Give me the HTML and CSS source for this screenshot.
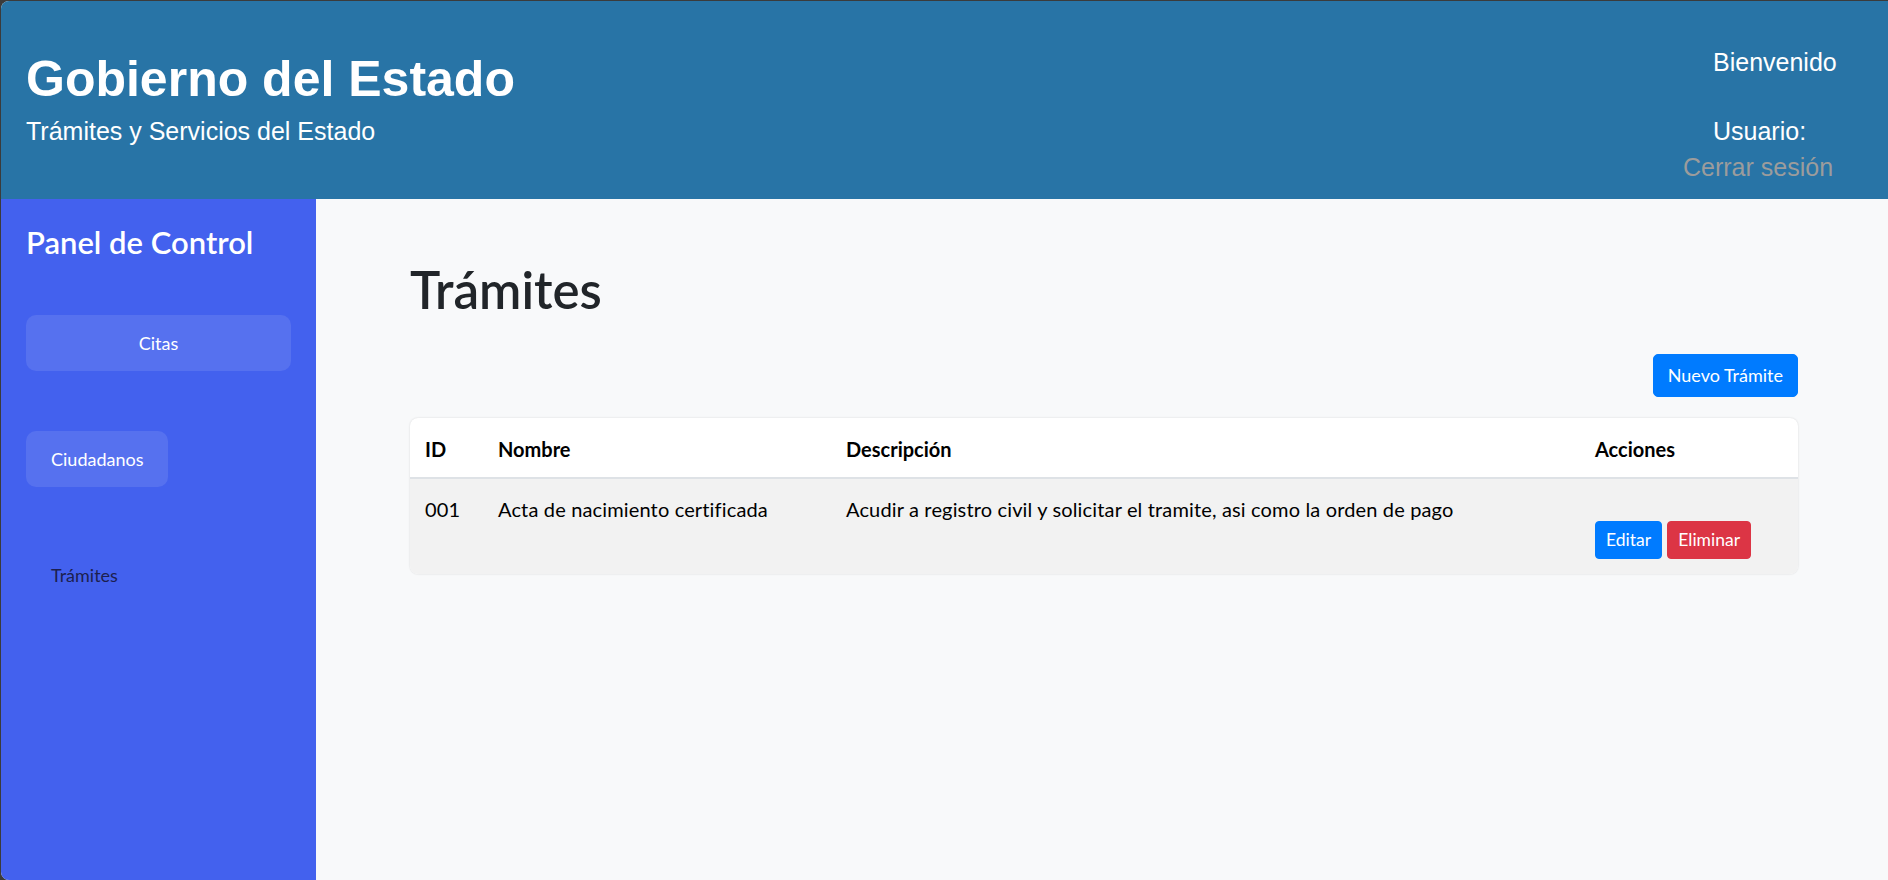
FILE: index.html
```html
<!DOCTYPE html>
<html lang="es">
<head>
<meta charset="utf-8">
<title>Trámites</title>
<link rel="stylesheet" href="styles.css">
</head>
<body>
<div class="window">
  <header class="topbar">
    <div class="brand">
      <h1 class="brand-title">Gobierno del Estado</h1>
      <p class="brand-sub">Trámites y Servicios del Estado</p>
    </div>
    <div class="user">
      <p class="user-welcome">Bienvenido</p>
      <p class="user-name">Usuario: </p>
      <a class="user-logout" href="#">Cerrar sesión</a>
    </div>
  </header>
  <div class="body">
    <aside class="sidebar">
      <h3 class="sidebar-title">Panel de Control</h3>
      <ul class="nav">
        <li class="nav-item"><a class="nav-link nav-link-block" href="#">Citas</a></li>
        <li class="nav-item"><a class="nav-link" href="#">Ciudadanos</a></li>
        <li class="nav-item"><a class="nav-link nav-link-plain" href="#">Trámites</a></li>
      </ul>
    </aside>
    <main class="content">
      <h1 class="page-title">Trámites</h1>
      <div class="toolbar">
        <a class="btn btn-primary" href="#">Nuevo Trámite</a>
      </div>
      <div class="table-card">
        <table class="table">
          <thead>
            <tr>
              <th class="c-id">ID</th>
              <th class="c-name">Nombre</th>
              <th class="c-desc">Descripción</th>
              <th class="c-act">Acciones</th>
            </tr>
          </thead>
          <tbody>
            <tr>
              <td>001</td>
              <td>Acta de nacimiento certificada</td>
              <td>Acudir a registro civil y solicitar el tramite, asi como la orden de pago</td>
              <td><div class="actions"><a class="btn btn-sm btn-primary" href="#">Editar</a> <a class="btn btn-sm btn-danger" href="#">Eliminar</a></div></td>
            </tr>
          </tbody>
        </table>
      </div>
    </main>
  </div>
</div>
</body>
</html>
```

FILE: styles.css
```css
* { box-sizing: border-box; }

html, body {
  margin: 0;
  padding: 0;
  height: 880px;
  overflow: hidden;
  background: #3b3b3b;
}

body {
  font-family: "Lato", "Noto Sans", sans-serif;
  color: #212529;
}

.window {
  margin: 1px 0 0 1px;
  height: 879px;
  border-radius: 8px 0 0 8px;
  overflow: hidden;
  display: flex;
  flex-direction: column;
  background: #f8f9fa;
}

/* Header */
.topbar {
  flex: 0 0 198px;
  height: 198px;
  background: #2874a6;
  color: #fff;
  display: flex;
  justify-content: space-between;
  font-family: "Liberation Sans", Arial, sans-serif;
}

.brand {
  padding: 48px 0 0 25px;
}

.brand-title {
  margin: 0 0 4px;
  font-size: 50px;
  line-height: 60px;
  font-weight: 700;
}

.brand-sub {
  margin: 0;
  font-size: 25px;
  line-height: 37.5px;
}

.user {
  width: 205px;
  padding-top: 43px;
  font-size: 25px;
  line-height: 37.5px;
}

.user-welcome {
  margin: 0 0 31px;
  padding-left: 30px;
}

.user-name {
  margin: 0;
  padding-left: 30px;
}

.user-logout {
  display: block;
  margin-top: -1px;
  color: #9c9c9c;
  text-decoration: none;
}

/* Body */
.body {
  flex: 1;
  display: flex;
  min-height: 0;
}

.sidebar {
  flex: 0 0 315px;
  width: 315px;
  background: #4361ee;
  padding: 25px 25px 0 25px;
  color: #fff;
}

.sidebar-title {
  margin: 0;
  font-size: 31px;
  line-height: 36px;
  font-weight: 600;
}

.nav {
  list-style: none;
  margin: 55px 0 0;
  padding: 0;
  display: flex;
  flex-direction: column;
  align-items: flex-start;
  gap: 60px;
}

.nav-item {
  width: 100%;
}

.nav-link {
  display: inline-block;
  padding: 13px 25px;
  font-size: 18px;
  line-height: 30px;
  color: #fff;
  text-decoration: none;
  background: rgba(255, 255, 255, 0.1);
  border-radius: 10px;
}

.nav-link-block {
  display: block;
  text-align: center;
}

.nav-link-plain {
  background: transparent;
  color: #1c1f4f;
}

/* Main content */
.content {
  flex: 1;
  padding: 61px 90px 0 94px;
}

.page-title {
  margin: 0 0 34px;
  font-size: 51px;
  line-height: 60px;
  font-weight: 600;
  color: #212529;
}

.toolbar {
  display: flex;
  justify-content: flex-end;
  margin-bottom: 21px;
}

.btn {
  display: inline-block;
  color: #fff;
  text-decoration: none;
  border: 1px solid transparent;
  font-size: 18px;
  line-height: 27px;
  padding: 7px 14px;
  border-radius: 5px;
}

.btn-primary {
  background: #007bff;
  border-color: #007bff;
}

.btn-danger {
  background: #dc3545;
  border-color: #dc3545;
}

.btn-sm {
  font-size: 17.5px;
  line-height: 26px;
  padding: 5px 10px;
  border-radius: 4px;
}

.table-card {
  background: #fff;
  border-radius: 8px;
  overflow: hidden;
  box-shadow: 0 0 2px rgba(0, 0, 0, 0.15);
}

.table {
  width: 100%;
  border-collapse: collapse;
  table-layout: fixed;
  font-size: 20px;
  color: #000;
}

.c-id { width: 73px; }
.c-name { width: 348px; }
.c-desc { width: 749px; }

.table th {
  text-align: left;
  font-weight: 700;
  padding: 16px 15px 13px;
  line-height: 30px;
  border-bottom: 2px solid #dee2e6;
  vertical-align: top;
}

.table td {
  padding: 15px 15px 15px;
  line-height: 30px;
  vertical-align: top;
  background: #f2f2f2;
  letter-spacing: 0.15px;
}

.actions {
  margin-top: 27px;
  white-space: nowrap;
  letter-spacing: 0;
}
```
